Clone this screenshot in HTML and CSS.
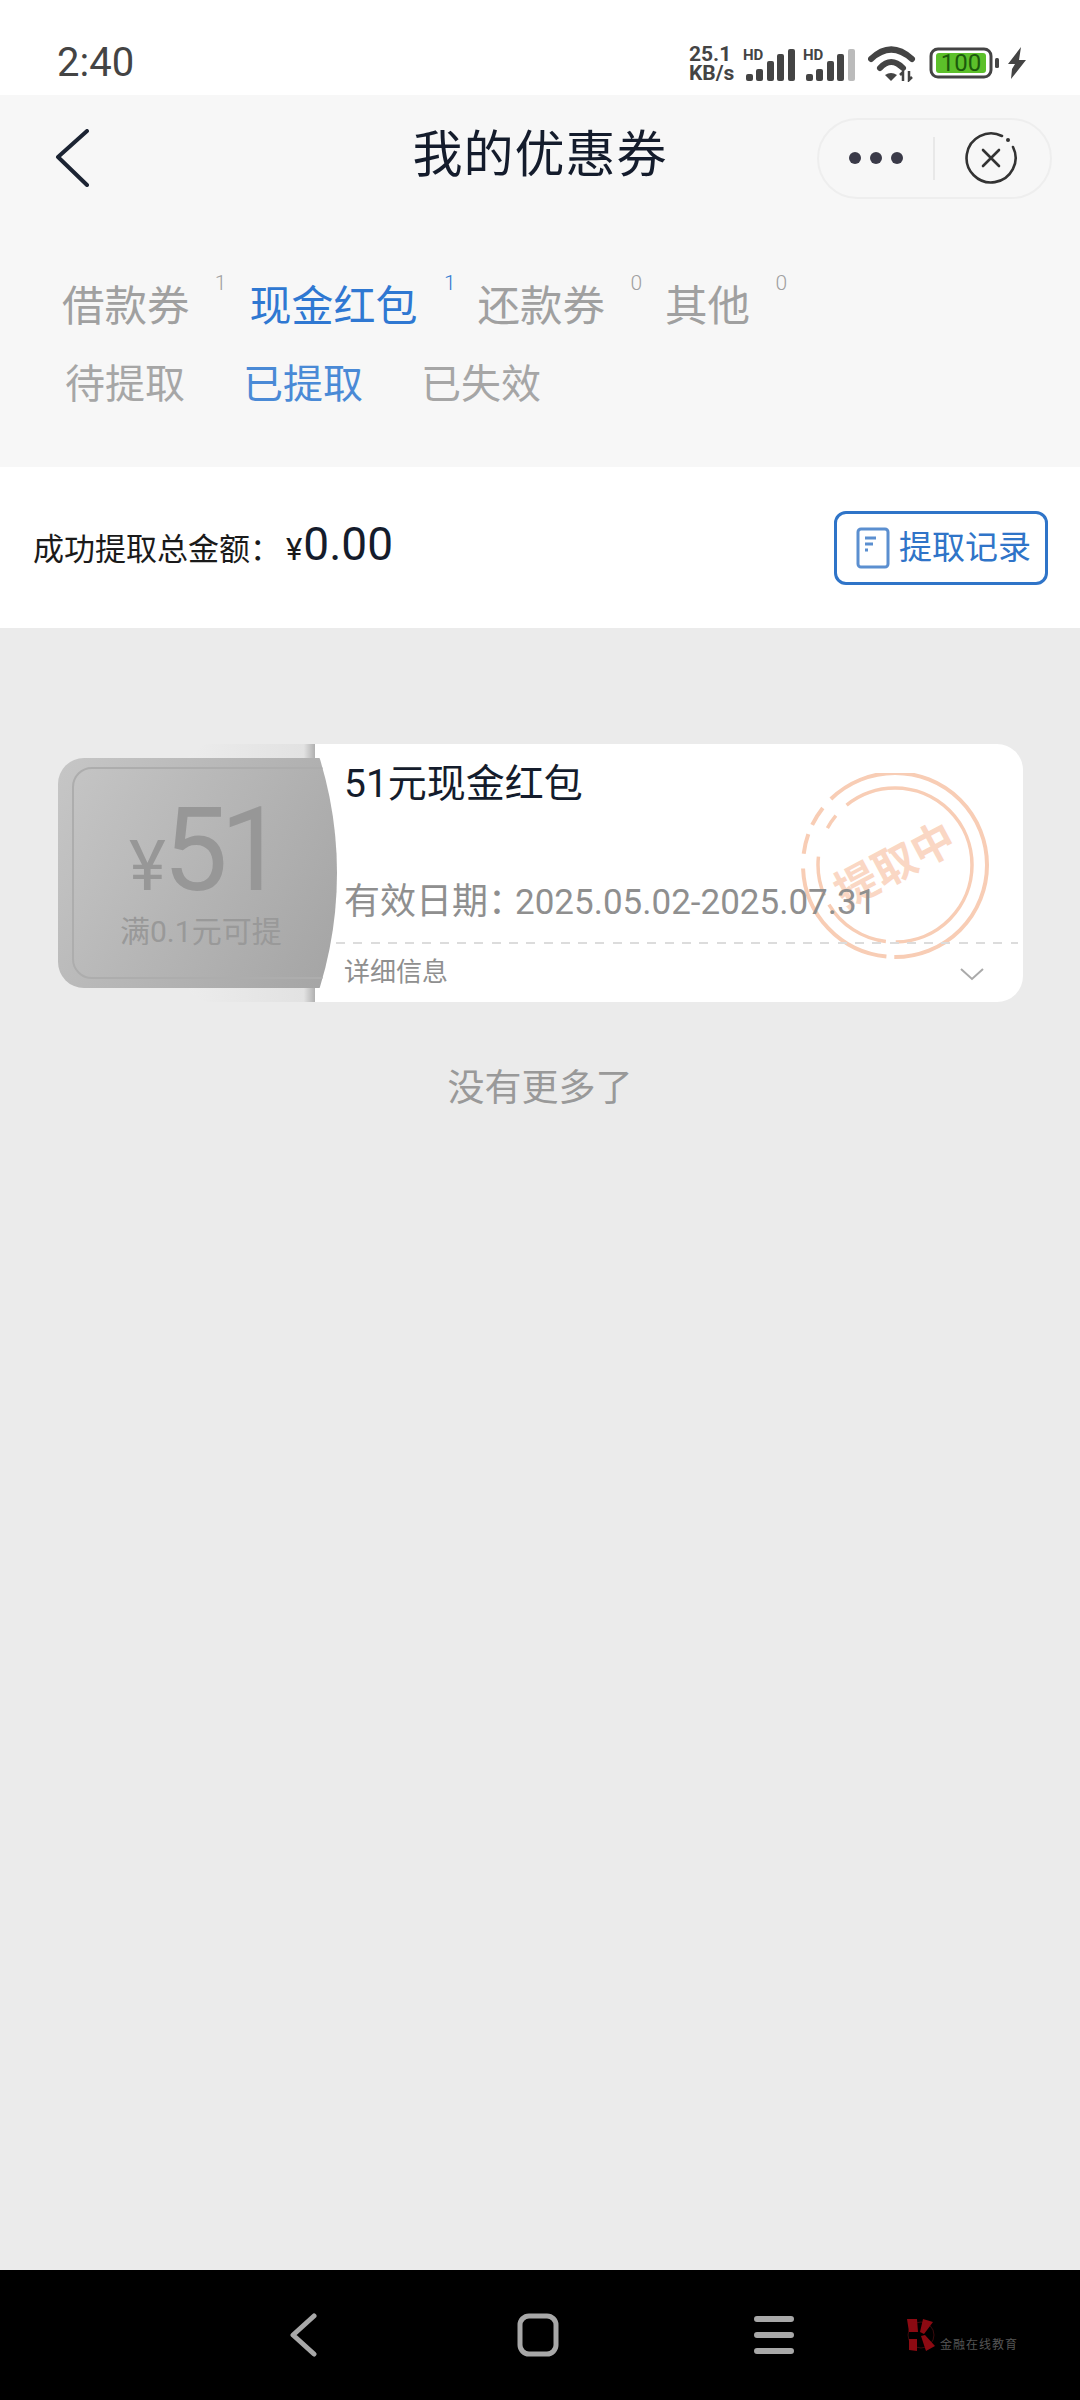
FILE: index.html
```html
<!DOCTYPE html>
<html lang="zh-CN">
  <head>
    <meta charset="UTF-8" />
    <meta name="viewport" content="width=device-width, initial-scale=1.0" />
    <title>我的优惠券</title>
    <link rel="stylesheet" href="styles.css">
  </head>

  <body>
    <div class="status">
      <span class="clock">2:40</span>
      <div class="status-icons">
        <span class="speed">25.1<br>KB/s</span>
        <svg class="signal" width="52" height="36" viewBox="0 0 52 36">
          <text x="0" y="14" class="hd">HD</text>
          <rect x="3" y="28" width="7" height="7" rx="2" fill="#444"/>
          <rect x="13" y="23" width="7" height="12" rx="2" fill="#444"/>
          <rect x="24" y="15" width="7" height="20" rx="2" fill="#444"/>
          <rect x="34" y="8" width="7" height="27" rx="2" fill="#444"/>
          <rect x="45" y="3" width="7" height="32" rx="2" fill="#444"/>
        </svg>
        <svg class="signal" width="52" height="36" viewBox="0 0 52 36">
          <text x="0" y="14" class="hd">HD</text>
          <rect x="3" y="28" width="7" height="7" rx="2" fill="#444"/>
          <rect x="13" y="23" width="7" height="12" rx="2" fill="#444"/>
          <rect x="24" y="15" width="7" height="20" rx="2" fill="#444"/>
          <rect x="34" y="8" width="7" height="27" rx="2" fill="#444"/>
          <rect x="45" y="3" width="7" height="32" rx="2" fill="#bbb"/>
        </svg>
        <svg class="wifi" width="48" height="36" viewBox="0 0 48 36">
          <path d="M3 13 Q23 -6 44 13" fill="none" stroke="#444" stroke-width="6" stroke-linecap="round"/>
          <path d="M12 22 Q23 10 35 22" fill="none" stroke="#444" stroke-width="6" stroke-linecap="round"/>
          <path d="M23 35 L17 29 Q23 25 29 29 Z" fill="#444"/>
          <path d="M35 35 V26 L32 29 M41 25 V34 L44 31" fill="none" stroke="#444" stroke-width="2.5"/>
        </svg>
        <svg class="battery" width="70" height="32" viewBox="0 0 70 32">
          <rect x="2" y="2" width="60" height="28" rx="7" fill="none" stroke="#444" stroke-width="3"/>
          <rect x="7" y="6" width="50" height="20" rx="3" fill="#5cc02a"/>
          <text x="32" y="24" class="battery-num">100</text>
          <rect x="66" y="11" width="4" height="10" rx="1.5" fill="#444"/>
        </svg>
        <svg class="bolt" width="20" height="32" viewBox="0 0 20 32">
          <path d="M14 0 L1 17 H8 L5 22 L4 32 L19 13 H12 Z" fill="#444"/>
        </svg>
      </div>
    </div>

    <header class="header">
      <div class="nav">
        <svg class="nav-back" width="36" height="58" viewBox="0 0 36 58">
          <path d="M33 2 L4 28 L33 56" fill="none" stroke="#1c2433" stroke-width="4" stroke-linecap="round" stroke-linejoin="round"/>
        </svg>
        <h1 class="title">我的优惠券</h1>
        <div class="capsule">
          <div class="dots"><i></i><i></i><i></i></div>
          <div class="capsule-line"></div>
          <svg width="54" height="54" viewBox="0 0 54 54">
            <path d="M38 5 A24.5 24.5 0 1 0 49 16" fill="none" stroke="#333" stroke-width="2.6" stroke-linecap="round"/>
            <circle cx="44" cy="9" r="2" fill="#333"/>
            <path d="M19 19 L35 35 M35 19 L19 35" stroke="#333" stroke-width="2.6" stroke-linecap="round"/>
          </svg>
        </div>
      </div>

      <div class="tabs">
        <div class="tab">借款券<sup>1</sup></div>
        <div class="tab active">现金红包<sup>1</sup></div>
        <div class="tab">还款券<sup>0</sup></div>
        <div class="tab">其他<sup>0</sup></div>
      </div>
      <div class="subtabs">
        <div class="subtab">待提取</div>
        <div class="subtab active">已提取</div>
        <div class="subtab">已失效</div>
      </div>
    </header>

    <div class="total">
      <div class="total-text">
        <span class="total-label">成功提取总金额：</span><span class="yen">¥</span><span class="amount">0.00</span>
      </div>
      <div class="record-btn">
        <svg width="34" height="42" viewBox="0 0 34 42">
          <rect x="2" y="2" width="30" height="38" rx="3" fill="none" stroke="#5b8fd0" stroke-width="3"/>
          <path d="M9 11 H20 M9 17 H17 M9 23 H12" stroke="#5b8fd0" stroke-width="3"/>
        </svg>
        <span class="record-label">提取记录</span>
      </div>
    </div>

    <main class="list">
      <div class="coupon">
        <div class="coupon-tab"></div>
        <div class="coupon-body">
          <svg class="stamp" width="200" height="190" viewBox="0 0 200 190">
            <circle cx="97" cy="92" r="92" fill="none" stroke="#f8cdb5" stroke-width="4" stroke-dasharray="145 8 132 15 20 10 20 12 216 0"/>
            <circle cx="97" cy="92" r="77" fill="none" stroke="#f8cdb5" stroke-width="3.5" stroke-dasharray="120 10 70 10 40 30 15 15 174 0"/>
            <text x="97" y="107" class="stamp-text" transform="rotate(-28 97 92)">提取中</text>
          </svg>
          <div class="coupon-name">51元现金红包</div>
          <div class="coupon-date">有效日期：<span class="coupon-range">2025.05.02-2025.07.31</span></div>
          <div class="coupon-dash"></div>
          <div class="coupon-more">
            <span class="more-label">详细信息</span>
            <svg class="more-arrow" width="26" height="14" viewBox="0 0 26 14">
              <path d="M2 2 L13 12 L24 2" fill="none" stroke="#aaa" stroke-width="2"/>
            </svg>
          </div>
        </div>
        <div class="stub">
          <div class="stub-price"><span class="stub-yen">¥</span>51</div>
          <div class="stub-rule">满0.1元可提</div>
        </div>
      </div>
      <p class="no-more">没有更多了</p>
    </main>

    <nav class="navbar">
      <svg width="28" height="44" viewBox="0 0 28 44">
        <path d="M25 3 L4 22 L25 41" fill="none" stroke="#a8a8a8" stroke-width="5" stroke-linecap="round" stroke-linejoin="round"/>
      </svg>
      <svg width="42" height="44" viewBox="0 0 42 44">
        <rect x="3" y="3" width="36" height="38" rx="9" fill="none" stroke="#a8a8a8" stroke-width="5"/>
      </svg>
      <svg width="40" height="40" viewBox="0 0 40 40">
        <path d="M3 4 H37 M3 20 H37 M3 36 H37" stroke="#a8a8a8" stroke-width="6" stroke-linecap="round"/>
      </svg>
      <div class="watermark">
        <svg width="30" height="34" viewBox="0 0 30 34">
          <circle cx="15" cy="17" r="13" fill="none" stroke="#3a0a0c" stroke-width="1"/>
          <path d="M1 1 H11 L12 14 H3 Z M17 1 L27 4 L18 16 L14 14 Z M3 21 H11 V33 L3 32 Z M15 18 L19 17 L29 28 L20 33 Z" fill="#8c0a12"/>
        </svg>
        <span>金融在线教育</span>
      </div>
    </nav>
  </body>
</html>
```

FILE: styles.css
```css
* {
  box-sizing: border-box;
}

body {
  margin: 0;
  width: 1080px;
  height: 2400px;
  display: flex;
  flex-direction: column;
  font-family: Roboto, "Noto Sans CJK SC", sans-serif;
  background-color: #ebebeb;
}

.status {
  height: 95px;
  padding: 44px 53px 0 57px;
  background-color: #fff;
  display: flex;
  justify-content: space-between;
  align-items: flex-start;
  flex-shrink: 0;
}

.clock {
  font-size: 40px;
  line-height: 38px;
  font-weight: 400;
  color: #444;
}

.status-icons {
  display: flex;
  align-items: flex-start;
}

.speed {
  font-size: 21px;
  line-height: 19px;
  font-weight: 700;
  color: #444;
  width: 54px;
  margin-top: 1px;
}

.signal {
  margin-right: 8px;
  margin-top: 2px;
}

.hd {
  font-size: 15px;
  font-weight: 700;
  fill: #444;
}

.wifi {
  margin: 2px 13px 0 5px;
}

.battery {
  margin-top: 3px;
}

.battery-num {
  font-size: 24px;
  text-anchor: middle;
  fill: #1c5a0c;
}

.bolt {
  margin: 3px 0 0 8px;
}

.header {
  height: 372px;
  background-color: #f7f7f7;
  flex-shrink: 0;
}

.nav {
  height: 126px;
  padding: 0 28px;
  display: grid;
  grid-template-columns: 1fr auto 1fr;
  align-items: center;
}

.nav-back {
  margin-left: 26px;
}

.title {
  margin: 0;
  font-size: 50px;
  line-height: 60px;
  font-weight: 400;
  letter-spacing: 1px;
  color: #141c2c;
  position: relative;
  top: -3px;
}

.capsule {
  justify-self: end;
  width: 235px;
  height: 81px;
  border: 2px solid #eeeeee;
  border-radius: 41px;
  display: flex;
  align-items: center;
  padding-left: 30px;
}

.dots {
  display: flex;
  gap: 9px;
  width: 84px;
}

.dots i {
  width: 12px;
  height: 12px;
  border-radius: 50%;
  background-color: #3a3a48;
}

.capsule-line {
  width: 2px;
  height: 43px;
  background-color: #e8e8e8;
  margin-right: 29px;
}

.tabs {
  margin-top: 56px;
  padding-left: 62px;
  display: flex;
  gap: 60px;
}

.tab {
  position: relative;
  font-size: 42.5px;
  line-height: 60px;
  color: #a0a0a0;
}

.tab.active {
  font-size: 42px;
  color: #2f78d2;
}

.tab sup {
  position: absolute;
  right: -37px;
  top: -8px;
  font-size: 21px;
  line-height: 28px;
  font-weight: 300;
}

.tab.active sup {
  right: -38px;
}

.subtabs {
  margin-top: 23px;
  padding-left: 65px;
  display: flex;
  gap: 58px;
}

.subtab {
  font-size: 40px;
  line-height: 50px;
  color: #a6a6a6;
}

.subtab.active {
  color: #4a8ad6;
}

.total {
  height: 161px;
  padding: 0 32px 0 33px;
  background-color: #fff;
  display: flex;
  justify-content: space-between;
  align-items: center;
  flex-shrink: 0;
}

.total-text {
  color: #1a1a1a;
  display: flex;
  align-items: baseline;
  padding-bottom: 8px;
}

.total-label {
  font-size: 31px;
  width: 253px;
  white-space: nowrap;
  overflow: hidden;
}

.yen {
  font-size: 31px;
}

.amount {
  font-size: 46px;
  margin-left: 1px;
  color: #141c2c;
}

.record-btn {
  width: 214px;
  height: 74px;
  border: 3px solid #2f74c8;
  border-radius: 12px;
  padding-left: 19px;
  display: flex;
  align-items: center;
  gap: 9px;
  font-size: 33px;
  color: #2f74c8;
}

.record-label {
  position: relative;
  top: -3px;
}

.list {
  flex: 1;
}

.coupon {
  position: relative;
  display: flex;
  height: 258px;
  margin: 116px 57px 0 58px;
}

.coupon-tab {
  position: absolute;
  left: 127px;
  top: 0;
  bottom: 0;
  width: 135px;
  border-radius: 26px 0 0 26px;
  background: linear-gradient(90deg, #ececec, #e2e2e2 88%, #9a9a9a);
}

.coupon-body {
  position: relative;
  flex: 1;
  margin-left: 257px;
  padding-left: 29px;
  background-color: #fff;
  border-radius: 0 26px 26px 0;
}

.stamp {
  position: absolute;
  left: 483px;
  top: 29px;
}

.stamp-text {
  font-size: 43px;
  font-weight: 700;
  text-anchor: middle;
  fill: #fad7c4;
}

.coupon-name {
  position: relative;
  margin-top: 20px;
  font-size: 39px;
  line-height: 40px;
  color: #141c2c;
}

.coupon-date {
  position: relative;
  margin-top: 76px;
  font-size: 36px;
  line-height: 44px;
  color: #8f8f8f;
  white-space: nowrap;
}

.coupon-range {
  font-size: 35px;
  margin-left: -9px;
}

.coupon-dash {
  position: relative;
  height: 2px;
  margin: 17px 5px 1px -8px;
  background: repeating-linear-gradient(90deg, #dcdcdc 0 9px, transparent 9px 17.3px);
}

.coupon-more {
  position: relative;
  height: 52px;
  padding-right: 38px;
  display: flex;
  justify-content: space-between;
  align-items: center;
  font-size: 26px;
  color: #8f8f8f;
}

.more-label {
  position: relative;
  top: -2px;
}

.more-arrow {
  position: relative;
  top: 3px;
}

.stub {
  position: absolute;
  left: 0;
  top: 14px;
  width: 280px;
  height: 230px;
  border-radius: 26px 0 0 26px;
  background: linear-gradient(120deg, #c6c6c6, #a4a4a4);
  clip-path: circle(389px at -110px 115px);
  padding: 37px 0 0 71px;
}

.stub::before {
  content: "";
  position: absolute;
  left: 14px;
  top: 9px;
  bottom: 9px;
  width: 300px;
  border: 2px solid #adadad;
  border-radius: 20px;
}

.stub-price {
  position: relative;
  font-size: 116px;
  line-height: 110px;
  letter-spacing: -8px;
  font-weight: 400;
  color: #979797;
  white-space: nowrap;
}

.stub-yen {
  font-size: 70px;
  letter-spacing: 0;
  margin-right: -3px;
}

.stub-rule {
  position: relative;
  margin: -9px 0 0 -9px;
  font-size: 30px;
  line-height: 40px;
  color: #999;
  white-space: nowrap;
}

.no-more {
  margin: 62px 0 0;
  text-align: center;
  font-size: 37px;
  line-height: 50px;
  color: #999;
}

.navbar {
  height: 130px;
  background-color: #000;
  flex-shrink: 0;
  display: flex;
  align-items: center;
  padding: 0 62px 0 289px;
}

.navbar svg:nth-child(2) {
  margin-left: 200px;
}

.navbar svg:nth-child(3) {
  margin-left: 195px;
}

.watermark {
  margin-left: 112px;
  display: flex;
  align-items: flex-end;
  gap: 4px;
  font-size: 12px;
  letter-spacing: 1px;
  color: #555;
  white-space: nowrap;
}
```
